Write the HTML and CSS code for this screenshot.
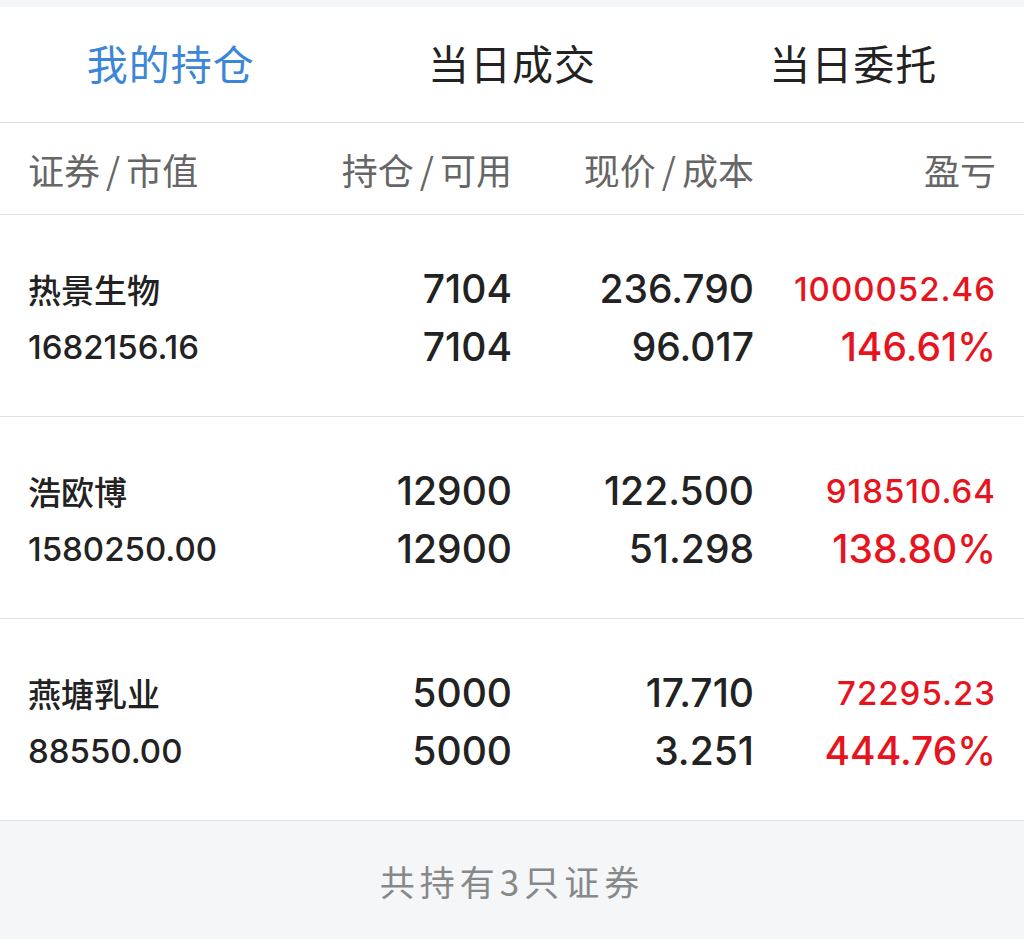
FILE: index.html
```html
<!DOCTYPE html>
<html>
<head>
	<meta charset="utf-8">
	<title>我的持仓</title>
	<link rel="stylesheet" href="styles.css">
</head>
<body>
	<div class="topstrip"></div>
	<div class="tabs">
		<div class="tab active">我的持仓</div>
		<div class="tab">当日成交</div>
		<div class="tab">当日委托</div>
	</div>
	<div class="head">
		<div class="col first">证券<span class="slash">/</span>市值</div>
		<div class="col">持仓<span class="slash">/</span>可用</div>
		<div class="col">现价<span class="slash">/</span>成本</div>
		<div class="col">盈亏</div>
	</div>

	<div class="row">
		<div class="col first"><span class="name">热景生物</span><span class="value">1682156.16</span></div>
		<div class="col"><span class="num">7104</span><span class="num">7104</span></div>
		<div class="col"><span class="num">236.790</span><span class="num">96.017</span></div>
		<div class="col red"><span class="profit">1000052.46</span><span class="num">146.61%</span></div>
	</div>
	<div class="row">
		<div class="col first"><span class="name">浩欧博</span><span class="value">1580250.00</span></div>
		<div class="col"><span class="num">12900</span><span class="num">12900</span></div>
		<div class="col"><span class="num">122.500</span><span class="num">51.298</span></div>
		<div class="col red"><span class="profit">918510.64</span><span class="num">138.80%</span></div>
	</div>
	<div class="row">
		<div class="col first"><span class="name">燕塘乳业</span><span class="value">88550.00</span></div>
		<div class="col"><span class="num">5000</span><span class="num">5000</span></div>
		<div class="col"><span class="num">17.710</span><span class="num">3.251</span></div>
		<div class="col red"><span class="profit">72295.23</span><span class="num">444.76%</span></div>
	</div>

	<div class="footer">共持有3只证券</div>
</body>
</html>
```

FILE: styles.css
```css
body {
	margin: 0;
	background: #fff;
	font-family: "Inter", "Noto Sans CJK SC", sans-serif;
	color: #222;
}

.topstrip {
	height: 7px;
	background: #f5f6f8;
}

.tabs {
	display: flex;
	height: 110px;
	padding-bottom: 5px;
	border-bottom: 1px solid #dedede;
}

.tab {
	flex: 1;
	display: flex;
	align-items: center;
	justify-content: center;
	font-family: "Noto Sans CJK SC", sans-serif;
	font-size: 41px;
	color: #222;
	letter-spacing: 1px;
}

.tab.active {
	color: #3b86d6;
}

.head,
.row {
	display: grid;
	grid-template-columns: repeat(4, 1fr);
	padding: 0 28px;
	border-bottom: 1px solid #e2e2e2;
}

.head {
	height: 91px;
	align-items: center;
	font-family: "Noto Sans CJK SC", sans-serif;
	font-size: 36px;
	color: #666;
}

.head .col {
	display: block;
	text-align: right;
}

.head .col.first {
	text-align: left;
}

.slash {
	margin: 0 6px;
}

.col {
	display: flex;
	flex-direction: column;
	align-items: flex-end;
}

.col.first {
	align-items: flex-start;
}

.row {
	height: 196px;
	padding-top: 5px;
	align-content: center;
}

.row span {
	display: block;
	height: 58px;
	line-height: 58px;
	white-space: nowrap;
}

.name {
	font-family: "Noto Sans CJK SC", sans-serif;
	font-size: 33px;
	font-weight: 500;
}

.value {
	font-size: 33px;
	font-weight: 500;
}

.num {
	font-size: 39px;
	font-weight: 500;
}

.profit {
	font-size: 33px;
	font-weight: 500;
	letter-spacing: 1px;
}

.red {
	color: #e6141e;
}

.footer {
	height: 118px;
	display: flex;
	align-items: center;
	justify-content: center;
	background: #f5f6f8;
	font-family: "Noto Sans CJK SC", sans-serif;
	font-size: 35px;
	letter-spacing: 5px;
	color: #888;
}
```
